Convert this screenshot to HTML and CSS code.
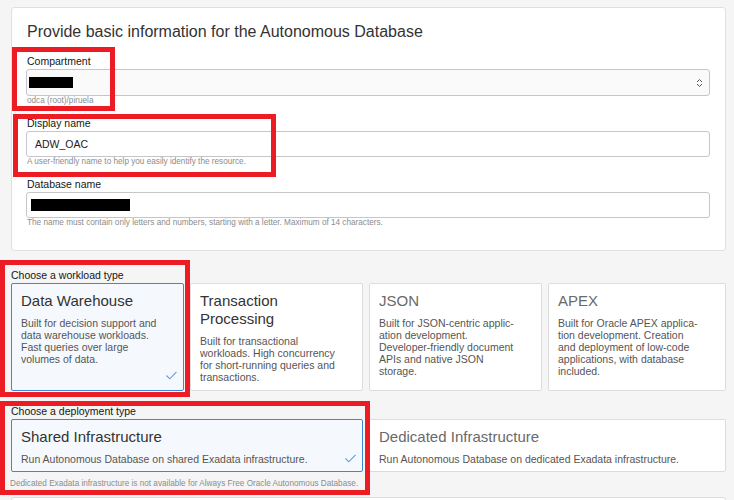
FILE: index.html
```html
<!DOCTYPE html>
<html lang="en">
<head>
<meta charset="utf-8">
<title>Create Autonomous Database</title>
<link rel="stylesheet" href="styles.css">
</head>
<body>
<div class="page">
  <section class="panel">
    <h2 class="panel-title">Provide basic information for the Autonomous Database</h2>
    <div class="field">
      <div class="field-label">Compartment</div>
      <div class="control select">
        <span class="redact redact-compartment"></span>
        <svg class="select-arrows" width="7" height="10" viewBox="0 0 7 10"><polyline points="1,4 3.5,1.5 6,4" fill="none" stroke="#555" stroke-width="1"/><polyline points="1,6 3.5,8.5 6,6" fill="none" stroke="#555" stroke-width="1"/></svg>
      </div>
      <div class="hint">odca (root)/piruela</div>
    </div>
    <div class="field">
      <div class="field-label">Display name</div>
      <div class="control text-input">ADW_OAC</div>
      <div class="hint">A user-friendly name to help you easily identify the resource.</div>
    </div>
    <div class="field">
      <div class="field-label">Database name</div>
      <div class="control text-input redacted-input"><span class="redact redact-dbname"></span></div>
      <div class="hint">The name must contain only letters and numbers, starting with a letter. Maximum of 14 characters.</div>
    </div>
  </section>

  <section class="choice-group workload">
    <div class="group-label">Choose a workload type</div>
    <div class="cards cards-workload">
      <div class="card selected">
        <div class="card-title">Data Warehouse</div>
        <div class="card-desc">Built for decision support and<br>data warehouse workloads.<br>Fast queries over large<br>volumes of data.</div>
        <svg class="check" width="11" height="9" viewBox="0 0 11 9"><polyline points="0.5,4.5 3.8,7.8 10.5,0.8" fill="none" stroke="#5b9de0" stroke-width="1.1"/></svg>
      </div>
      <div class="card">
        <div class="card-title">Transaction<br>Processing</div>
        <div class="card-desc">Built for transactional<br>workloads. High concurrency<br>for short-running queries and<br>transactions.</div>
      </div>
      <div class="card muted">
        <div class="card-title">JSON</div>
        <div class="card-desc">Built for JSON-centric applic-<br>ation development.<br>Developer-friendly document<br>APIs and native JSON<br>storage.</div>
      </div>
      <div class="card muted">
        <div class="card-title">APEX</div>
        <div class="card-desc">Built for Oracle APEX applica-<br>tion development. Creation<br>and deployment of low-code<br>applications, with database<br>included.</div>
      </div>
    </div>
  </section>

  <section class="choice-group deployment">
    <div class="group-label">Choose a deployment type</div>
    <div class="cards cards-deploy">
      <div class="card selected">
        <div class="card-title">Shared Infrastructure</div>
        <div class="card-desc">Run Autonomous Database on shared Exadata infrastructure.</div>
        <svg class="check check-deploy" width="11" height="9" viewBox="0 0 11 9"><polyline points="0.5,4.5 3.8,7.8 10.5,0.8" fill="none" stroke="#5b9de0" stroke-width="1.1"/></svg>
      </div>
      <div class="card muted">
        <div class="card-title">Dedicated Infrastructure</div>
        <div class="card-desc">Run Autonomous Database on dedicated Exadata infrastructure.</div>
      </div>
    </div>
    <div class="hint group-hint">Dedicated Exadata infrastructure is not available for Always Free Oracle Autonomous Database.</div>
  </section>

  <section class="panel next-panel"></section>
</div>

<div class="annotation ann-compartment"></div>
<div class="annotation ann-display"></div>
<div class="annotation ann-workload"></div>
<div class="annotation ann-deploy"></div>
</body>
</html>
```

FILE: styles.css
```css
html, body {
  margin: 0;
  padding: 0;
}

body {
  background: #f5f5f5;
  font-family: "Liberation Sans", Arial, sans-serif;
  color: #333;
  width: 734px;
  height: 500px;
  overflow: hidden;
  position: relative;
}

.page {
  padding: 7px 8px 0 11px;
  width: 715px;
}

.panel {
  background: #fff;
  border: 1px solid #e0e0e0;
  border-radius: 3px;
  padding: 14px 15px 22px 14px;
}

.panel-title {
  margin: 0 0 14px 1px;
  font-size: 16px;
  line-height: 19px;
  font-weight: normal;
  color: #333;
}

.field {
  margin-bottom: 11px;
}

.field:last-child {
  margin-bottom: 0;
}

.field-label {
  font-size: 10.5px;
  line-height: 12px;
  color: #161616;
  margin: 0 0 2px 1px;
}

.control {
  box-sizing: border-box;
  width: 684px;
  border: 1px solid #c4c6ca;
  border-radius: 3px;
  display: flex;
  align-items: center;
  font-size: 10.5px;
  color: #222;
}

.select {
  height: 27px;
  background: #fafafa;
  padding: 0 6px 0 2px;
  justify-content: space-between;
}

.select-arrows {
  display: block;
}

.text-input {
  height: 26px;
  background: #fff;
  padding: 0 8px;
}

.redacted-input {
  padding-left: 4px;
}

.redact {
  display: block;
  background: #000;
}

.redact-compartment {
  width: 44px;
  height: 11px;
}

.redact-dbname {
  width: 99px;
  height: 12px;
}

.hint {
  font-size: 8.2px;
  line-height: 10px;
  color: #8c8c8c;
  margin-left: 1px;
}

.choice-group.workload {
  margin-top: 18px;
}

.choice-group.deployment {
  margin-top: 14px;
}

.group-label {
  font-size: 10.5px;
  line-height: 12px;
  color: #161616;
  margin-bottom: 2px;
}

.cards {
  display: grid;
  column-gap: 6px;
}

.cards-workload {
  grid-template-columns: 173px 173px 173px 1fr;
}

.cards-deploy {
  grid-template-columns: 352px 1fr;
}

.card {
  position: relative;
  background: #fff;
  border: 1px solid #dcdcdc;
  border-radius: 2px;
  padding: 8px 9px 7px 9px;
}

.cards-deploy .card {
  padding-bottom: 6px;
}

.card.selected {
  background: #f5f9fd;
  border-color: #3c87d8;
}

.card-title {
  font-size: 15px;
  line-height: 18px;
  color: #333;
  margin-bottom: 7px;
}

.card.muted .card-title {
  color: #6a6a6a;
}

.card-desc {
  font-size: 10.5px;
  line-height: 12px;
  color: #555;
  white-space: nowrap;
}

.check {
  position: absolute;
  right: 6px;
  bottom: 10px;
}

.check.check-deploy {
  bottom: 8px;
}

.group-hint {
  margin: 7px 0 0 -1px;
}

.next-panel {
  margin-top: 8px;
  height: 20px;
  padding: 0;
  border-color: #dcdcdc;
}

.annotation {
  position: absolute;
  box-sizing: border-box;
  border: 5px solid #ed1c24;
  pointer-events: none;
}

.ann-compartment {
  left: 12px;
  top: 47px;
  width: 103px;
  height: 64px;
}

.ann-display {
  left: 13px;
  top: 114px;
  width: 263px;
  height: 63px;
}

.ann-workload {
  left: 0;
  top: 260px;
  width: 190px;
  height: 137px;
}

.ann-deploy {
  left: 0;
  top: 401px;
  width: 370px;
  height: 94px;
}
```
